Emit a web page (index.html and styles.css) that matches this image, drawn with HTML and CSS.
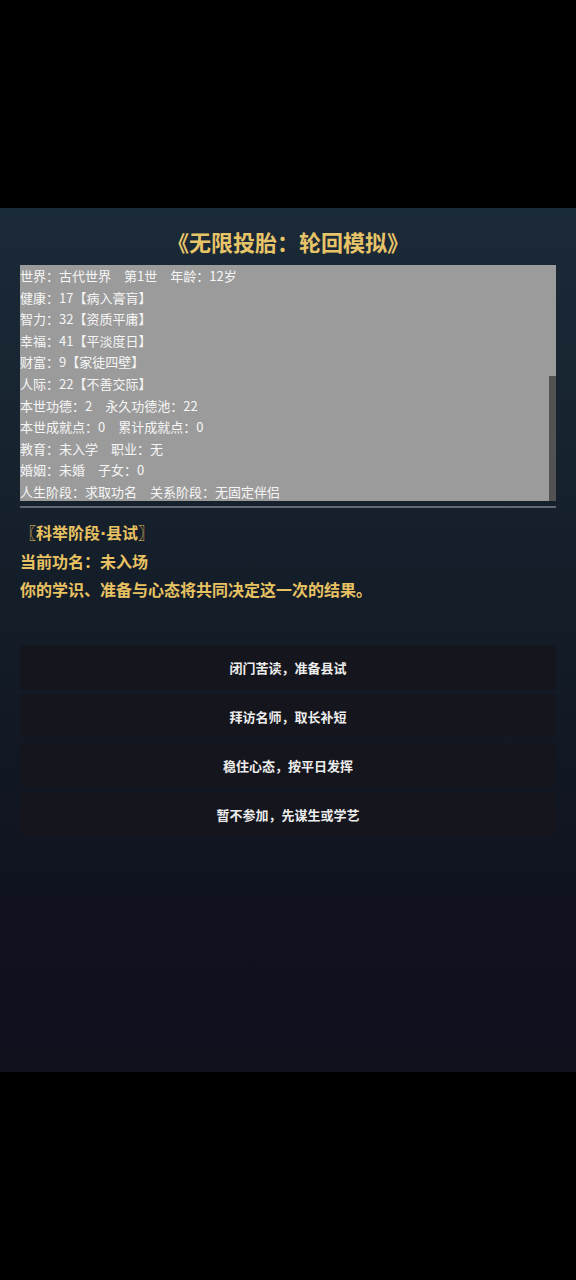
FILE: index.html
```html
<!DOCTYPE html>
<html lang="zh">
<head>
<meta charset="utf-8">
<title>无限投胎：轮回模拟</title>
<link rel="stylesheet" href="styles.css">
</head>
<body>
<div class="top-bar"></div>
<main class="app">
  <h1 class="title">《无限投胎：轮回模拟》</h1>
  <div class="stats">
    <div class="stats-inner">
      <div class="line">世界：古代世界　第1世　年龄：12岁</div>
      <div class="line">健康：17【病入膏肓】</div>
      <div class="line">智力：32【资质平庸】</div>
      <div class="line">幸福：41【平淡度日】</div>
      <div class="line">财富：9【家徒四壁】</div>
      <div class="line">人际：22【不善交际】</div>
      <div class="line">本世功德：2　永久功德池：22</div>
      <div class="line">本世成就点：0　累计成就点：0</div>
      <div class="line">教育：未入学　职业：无</div>
      <div class="line">婚姻：未婚　子女：0</div>
      <div class="line">人生阶段：求取功名　关系阶段：无固定伴侣</div>
    </div>
    <div class="scroll-thumb"></div>
  </div>
  <div class="divider"></div>
  <section class="story">
    <div class="story-line">〖科举阶段<span class="dot">·</span>县试〗</div>
    <div class="story-line">当前功名：未入场</div>
    <div class="story-line">你的学识、准备与心态将共同决定这一次的结果。</div>
  </section>
  <div class="choices">
    <button class="choice">闭门苦读，准备县试</button>
    <button class="choice">拜访名师，取长补短</button>
    <button class="choice">稳住心态，按平日发挥</button>
    <button class="choice">暂不参加，先谋生或学艺</button>
  </div>
</main>
<div class="bottom-bar"></div>
</body>
</html>
```

FILE: styles.css
```css
html, body {
  margin: 0;
  padding: 0;
  background: #000;
}
body {
  width: 576px;
  font-family: "Noto Sans CJK SC", "Noto Sans", sans-serif;
}
.top-bar {
  height: 208px;
  background: #000;
}
.bottom-bar {
  height: 208px;
  background: #000;
}
.app {
  height: 864px;
  box-sizing: border-box;
  padding: 18px 20px 0 20px;
  background: linear-gradient(180deg, #1b2a38 0%, #16222e 30%, #121a25 55%, #10131f 80%, #0f111d 100%);
}
.title {
  margin: 0;
  height: 30px;
  line-height: 30px;
  text-align: center;
  font-size: 22px;
  font-weight: 700;
  color: #e8c468;
}
.stats {
  position: relative;
  margin-top: 9px;
  height: 236px;
  background: #9b9b9b;
  overflow: hidden;
}
.line {
  height: 21.6px;
  line-height: 21.6px;
  font-size: 13px;
  color: #f6f6f6;
  white-space: nowrap;
}
.scroll-thumb {
  position: absolute;
  right: 0;
  top: 111px;
  width: 7px;
  bottom: 0;
  background: #525252;
}
.divider {
  margin-top: 5px;
  height: 2px;
  background: #5f6873;
}
.story {
  margin-top: 10px;
}
.story-line {
  height: 28.5px;
  line-height: 28.5px;
  font-size: 16px;
  font-weight: 700;
  color: #e8c262;
  white-space: nowrap;
  overflow: hidden;
}
.dot {
  font-family: "DejaVu Sans", sans-serif;
  line-height: 1;
}
.choices {
  margin-top: 41px;
  display: flex;
  flex-direction: column;
  gap: 4px;
}
.choice {
  display: block;
  width: 100%;
  height: 45px;
  border: none;
  border-radius: 3px;
  background: #15161d;
  color: #ededed;
  font-family: "Noto Sans CJK SC", "Noto Sans", sans-serif;
  font-size: 13px;
  font-weight: 700;
  text-align: center;
  padding: 0;
}
```
